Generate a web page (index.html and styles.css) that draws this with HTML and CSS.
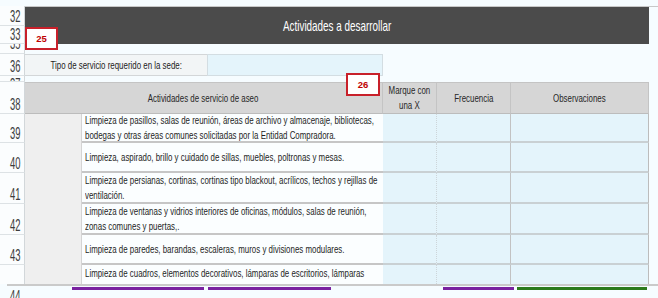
FILE: index.html
```html
<!DOCTYPE html>
<html lang="es">
<head>
<meta charset="utf-8">
<title>Actividades a desarrollar</title>
<link rel="stylesheet" href="styles.css">
</head>
<body>
<div class="sheet">
  <div class="num row2"><span>32</span></div>
  <div class="num row3"><span>33</span></div>
  <div class="num row4 part-bottom"><span>35</span></div>
  <div class="num row5"><span>36</span></div>
  <div class="num row6 part-top"><span>37</span></div>
  <div class="num row7"><span>38</span></div>
  <div class="num row8"><span>39</span></div>
  <div class="num row9"><span>40</span></div>
  <div class="num row10"><span>41</span></div>
  <div class="num row11"><span>42</span></div>
  <div class="num row12"><span>43</span></div>
  <div class="num row13"></div>

  <div class="band"><span>Actividades a desarrollar</span></div>
  <div class="edge"></div>

  <div class="label"><span class="sq">Tipo de servicio requerido en la sede:</span></div>
  <div class="input"></div>

  <div class="hd hd-act"><span class="sq">Actividades de servicio de aseo</span></div>
  <div class="hd hd-d"><span class="sq">Marque con<br>una X</span></div>
  <div class="hd hd-e"><span class="sq">Frecuencia</span></div>
  <div class="hd hd-f"><span class="sq">Observaciones</span></div>

  <div class="grayb"></div>

  <div class="desc row8"><div class="tx">Limpieza de pasillos, salas de reunión, áreas de archivo y almacenaje, bibliotecas,<br>bodegas y otras áreas comunes solicitadas por la Entidad Compradora.</div></div>
  <div class="cd row8"></div><div class="ce row8"></div><div class="cf row8"></div>

  <div class="desc row9"><div class="tx">Limpieza, aspirado, brillo y cuidado de sillas, muebles, poltronas y mesas.</div></div>
  <div class="cd row9"></div><div class="ce row9"></div><div class="cf row9"></div>

  <div class="desc row10"><div class="tx">Limpieza de persianas, cortinas, cortinas tipo blackout, acrílicos, techos y rejillas de<br>ventilación.</div></div>
  <div class="cd row10"></div><div class="ce row10"></div><div class="cf row10"></div>

  <div class="desc row11"><div class="tx">Limpieza de ventanas y vidrios interiores de oficinas, módulos, salas de reunión,<br>zonas comunes y puertas,.</div></div>
  <div class="cd row11"></div><div class="ce row11"></div><div class="cf row11"></div>

  <div class="desc row12"><div class="tx">Limpieza de paredes, barandas, escaleras, muros y divisiones modulares.</div></div>
  <div class="cd row12"></div><div class="ce row12"></div><div class="cf row12"></div>

  <div class="desc row13 desc-top"><div class="tx">Limpieza de cuadros, elementos decorativos, lámparas de escritorios, lámparas</div></div>
  <div class="cd row13"></div><div class="ce row13"></div><div class="cf row13"></div>

  <div class="badge badge-25">25</div>
  <div class="badge badge-26">26</div>
</div>
<div class="foot">
  <div class="foot-line"></div>
  <div class="foot-num"><span>44</span></div>
  <div class="tabs">
    <div class="tab tab1"></div>
    <div class="tab tab2"></div>
    <div class="tab tab3"></div>
    <div class="tab tab4"></div>
  </div>
</div>
</body>
</html>
```
FILE: styles.css
```css
html, body {
  margin: 0;
  padding: 0;
  background: #f6fcff;
}
body {
  width: 658px;
  height: 298px;
  overflow: hidden;
  font-family: "Liberation Sans", Arial, sans-serif;
  color: #222;
}
.sheet {
  position: relative;
  display: grid;
  grid-template-columns: 25px 57px 125px 176px 54px 74px 138px 9px;
  grid-template-rows: 6px 20px 18px 10px 22px 6px 32px 29px 30px 31px 31px 30px 19px;
  height: 284px;
  overflow: hidden;
  background: #f6fcff;
}
.row2 { grid-row: 2; }
.row3 { grid-row: 3; }
.row4 { grid-row: 4; }
.row5 { grid-row: 5; }
.row6 { grid-row: 6; }
.row7 { grid-row: 7; }
.row8 { grid-row: 8; }
.row9 { grid-row: 9; }
.row10 { grid-row: 10; }
.row11 { grid-row: 11; }
.row12 { grid-row: 12; }
.row13 { grid-row: 13; }

.sq {
  display: inline-block;
  transform: scaleX(0.79);
  white-space: nowrap;
}

.num {
  grid-column: 1;
  box-sizing: border-box;
  display: flex;
  align-items: flex-end;
  justify-content: center;
  padding: 0 0 1px 6px;
  border-right: 1px solid #d2d7da;
  border-bottom: 1px solid #dde2e5;
  background: #fbfdfe;
  color: #3c3c3c;
  font-size: 16.5px;
  line-height: 1;
  overflow: hidden;
}
.num span, .foot-num span {
  display: inline-block;
  transform: scaleX(0.57);
}
.part-bottom {
  align-items: flex-start;
}
.part-bottom span {
  margin-top: -9px;
}
.part-top span {
  margin-bottom: -12px;
}

.band {
  grid-column: 2 / 8;
  grid-row: 2 / 4;
  background: #4b4b4b;
  color: #fff;
  display: flex;
  align-items: center;
  justify-content: center;
  font-size: 15px;
  border-top: 1px solid #c8c8c8;
}
.band span {
  display: inline-block;
  transform: scaleX(0.66);
  white-space: nowrap;
}
.edge {
  grid-column: 8;
  grid-row: 2;
  border-top: 1px solid #c8c8c8;
}

.label {
  grid-column: 2 / 4;
  grid-row: 5;
  box-sizing: border-box;
  background: #f2f5f6;
  border-top: 1px solid #d3d6d8;
  border-bottom: 1px solid #d3d6d8;
  display: flex;
  align-items: center;
  justify-content: center;
  font-size: 10px;
}
.input {
  grid-column: 4;
  grid-row: 5;
  box-sizing: border-box;
  background: #e4f4fb;
  border: 1px solid #d3dde2;
}

.hd {
  grid-row: 7;
  box-sizing: border-box;
  background: #d6d6d6;
  border-top: 1px solid #c4c4c4;
  border-bottom: 1px solid #bcbcbc;
  border-right: 1px solid #c4c4c4;
  display: flex;
  align-items: center;
  justify-content: center;
  text-align: center;
  font-size: 10px;
  line-height: 15px;
  color: #262626;
}
.hd-act { grid-column: 2 / 5; }
.hd-d { grid-column: 5; }
.hd-e { grid-column: 6; }
.hd-f { grid-column: 7; }

.grayb {
  grid-column: 2;
  grid-row: 8 / 14;
  background: #efefef;
  border-right: 1px solid #d4d4d4;
}
.desc {
  grid-column: 3 / 5;
  box-sizing: border-box;
  background: #fbfeff;
  border-bottom: 2px solid #c6c6c6;
  display: flex;
  align-items: center;
  padding-left: 3px;
  font-size: 10px;
  line-height: 15px;
  color: #1e1e1e;
}
.desc .tx {
  flex: none;
  white-space: nowrap;
  transform: scaleX(0.79);
  transform-origin: left center;
}
.desc-top {
  align-items: flex-start;
  padding-top: 1px;
  overflow: hidden;
  border-bottom: none;
}
.cd, .ce, .cf {
  box-sizing: border-box;
  background: #e4f4fb;
  border-bottom: 2px solid #c9d0d3;
}
.row13.cd, .row13.ce, .row13.cf, .row13.num {
  border-bottom: none;
}
.cd {
  grid-column: 5;
  border-right: 1px dotted #cdd5d9;
}
.ce {
  grid-column: 6;
  border-right: 1px solid #c2c2c2;
}
.cf {
  grid-column: 7;
  border-right: 1px solid #bcbcbc;
}

.badge {
  position: absolute;
  box-sizing: border-box;
  height: 23px;
  background: #fff;
  border: 2px solid #c8202a;
  color: #c00000;
  font-weight: bold;
  font-size: 9.5px;
  display: flex;
  align-items: center;
  justify-content: center;
}
.badge-25 {
  left: 25px;
  top: 27px;
  width: 33px;
}
.badge-26 {
  left: 346px;
  top: 73px;
  width: 34px;
}

.foot {
  height: 14px;
  display: grid;
  grid-template-columns: 25px 1fr;
  grid-template-rows: 2px 12px;
  overflow: hidden;
}
.foot-line {
  grid-column: 1 / 3;
  margin-left: 7px;
  background: #cacaca;
}
.foot-num {
  grid-column: 1;
  display: flex;
  justify-content: center;
  align-items: flex-start;
  padding: 2px 0 0 6px;
  font-size: 16.5px;
  line-height: 1;
  color: #3c3c3c;
  overflow: hidden;
}
.tabs {
  grid-column: 2;
  display: flex;
  padding-left: 47px;
  margin-top: 1px;
}
.tab {
  height: 3px;
}
.tab1 { width: 132px; background: #7a22a0; }
.tab2 { width: 123px; margin-left: 4px; background: #7a22a0; }
.tab3 { width: 71px; margin-left: 112px; background: #7a22a0; }
.tab4 { width: 130px; margin-left: 3px; background: #2c7a1c; }
```
